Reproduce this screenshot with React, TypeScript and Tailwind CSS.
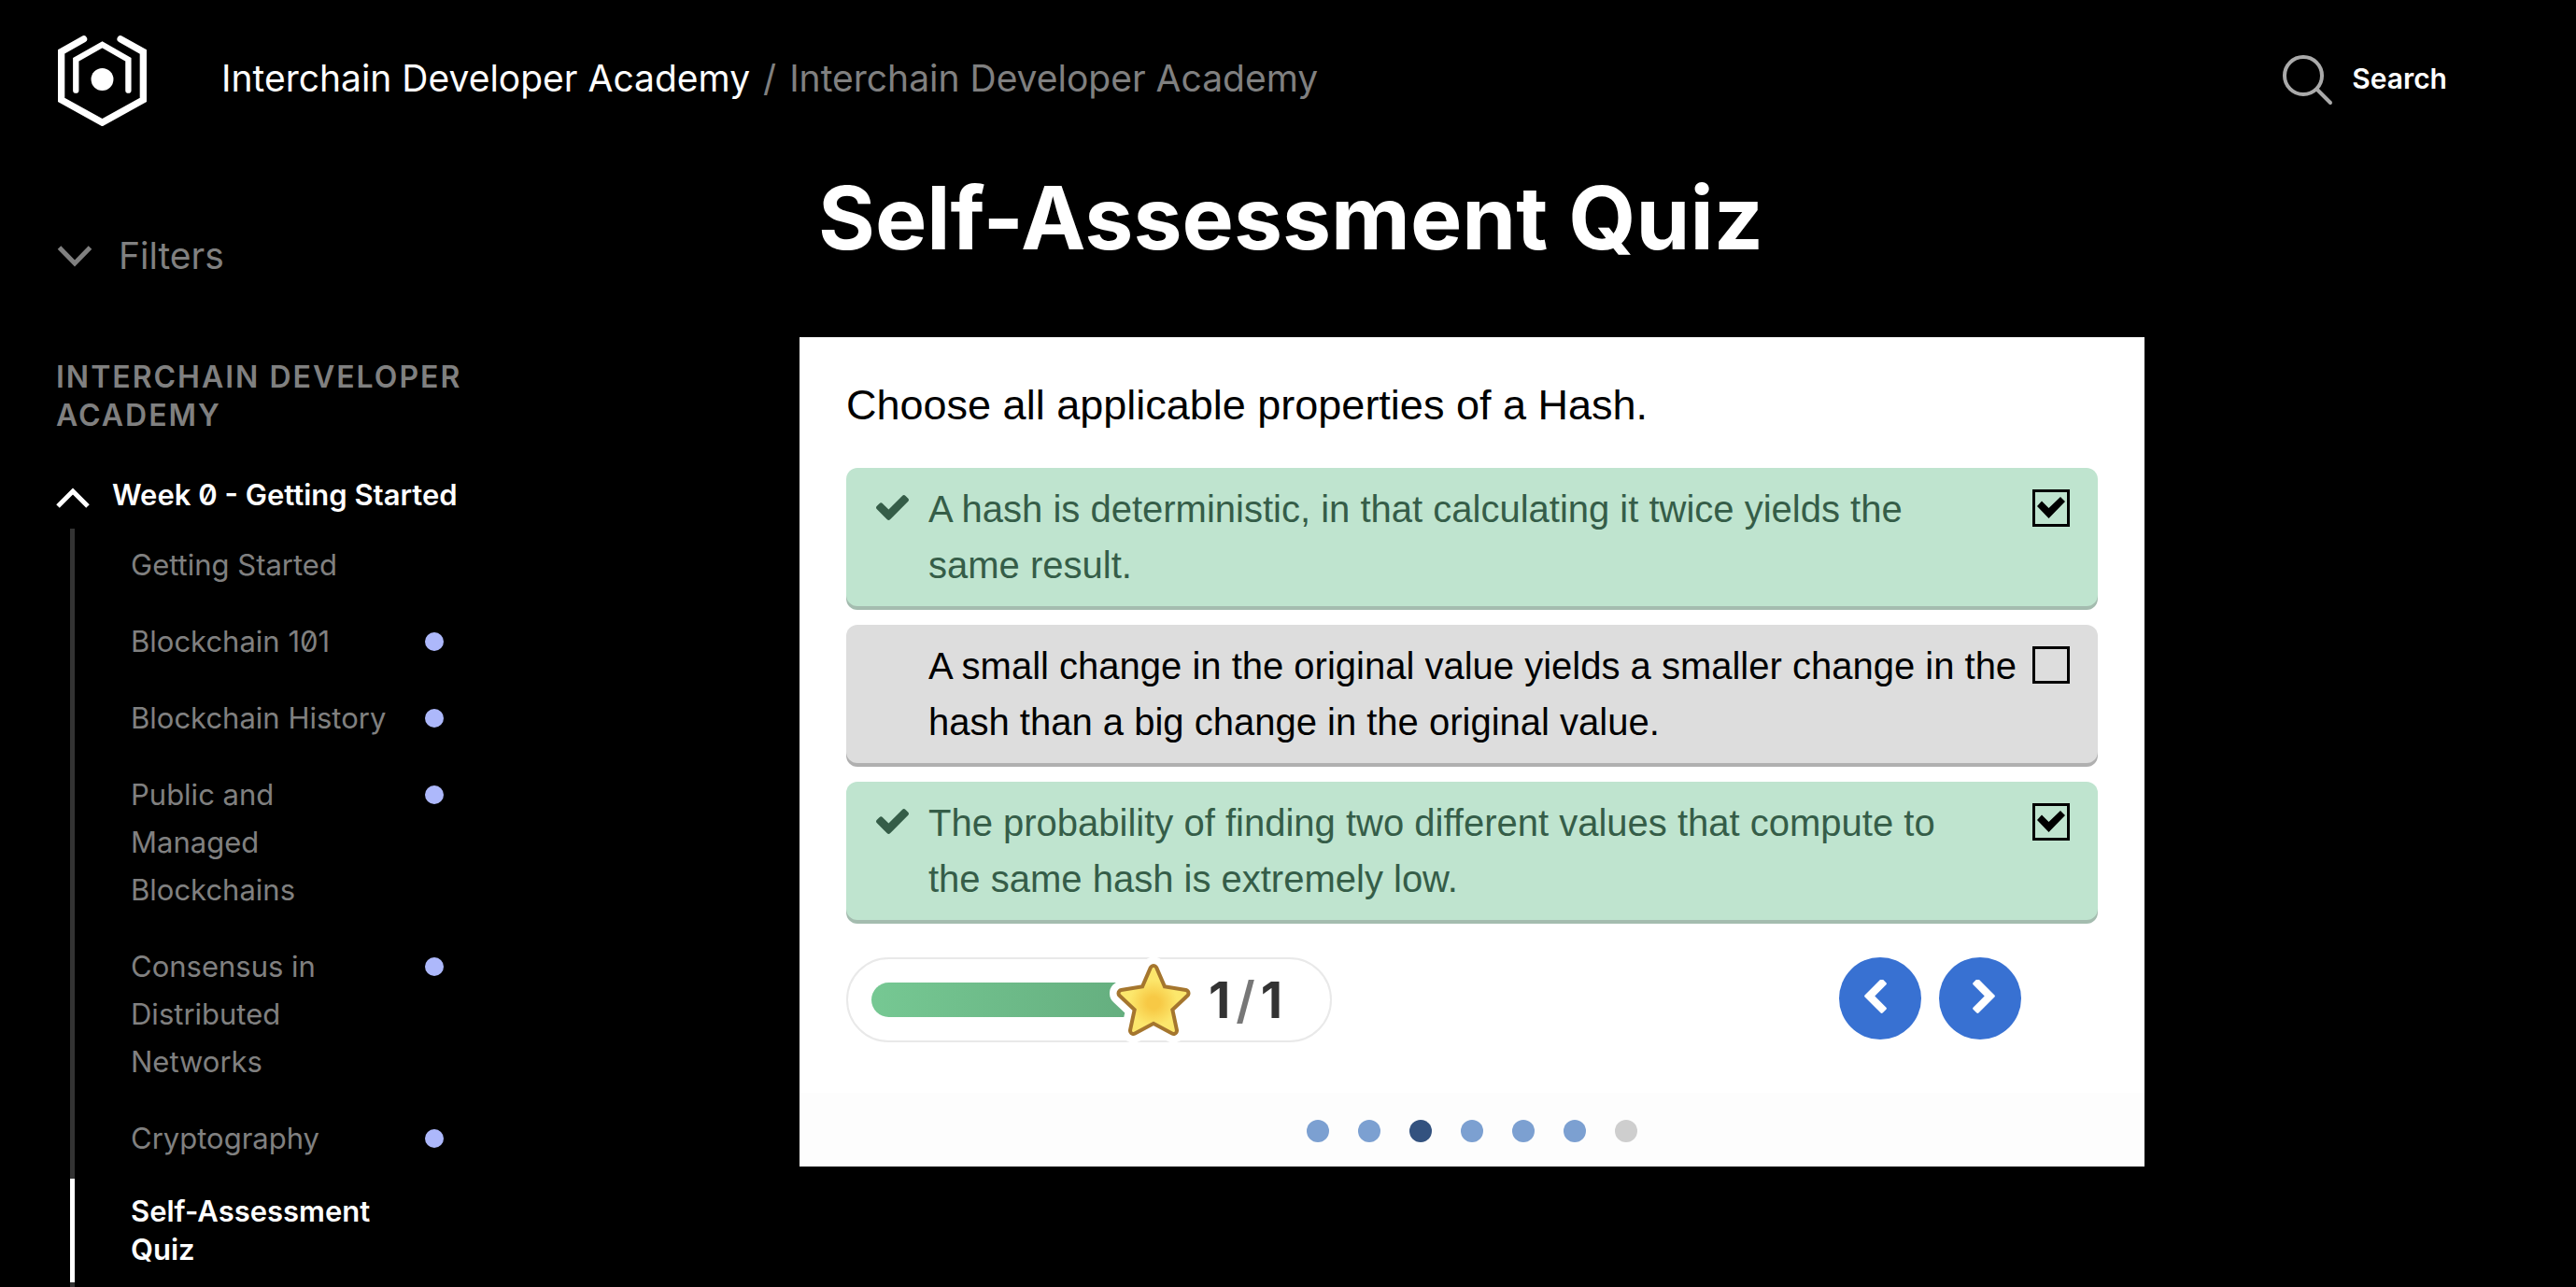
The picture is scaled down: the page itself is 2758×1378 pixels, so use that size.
import { useState } from "react";

type Lesson = { title: string; unread?: boolean; active?: boolean };

const lessons: Lesson[] = [
  { title: "Getting Started" },
  { title: "Blockchain 101", unread: true },
  { title: "Blockchain History", unread: true },
  { title: "Public and Managed Blockchains", unread: true },
  { title: "Consensus in Distributed Networks", unread: true },
  { title: "Cryptography", unread: true },
  { title: "Self-Assessment Quiz", active: true },
];

const answers = [
  { text: "A hash is deterministic, in that calculating it twice yields the same result.", correct: true },
  { text: "A small change in the original value yields a smaller change in the hash than a big change in the original value.", correct: false },
  { text: "The probability of finding two different values that compute to the same hash is extremely low.", correct: true },
];

const steps = ["done", "done", "current", "done", "done", "done", "todo"];

function Logo() {
  return (
    <svg viewBox="66 54 286 291" className="h-[97px] w-[95px]" fill="none" stroke="white" strokeLinecap="round" aria-hidden="true">
      <path d="M149 65 77 106V261L209 334 341 261V106L268 65" strokeWidth="22" />
      <path d="M124 230V131L209 83 293 131V230" strokeWidth="19" />
      <circle cx="209" cy="195" r="36" fill="white" stroke="none" />
    </svg>
  );
}

function Tick({ className }: { className: string }) {
  return (
    <svg viewBox="121 334 1550 1188" className={className} fill="currentColor" aria-hidden="true">
      <path d="M1671 566q0 40-28 68l-724 724-136 136q-28 28-68 28t-68-28l-136-136-362-362q-28-28-28-68t28-68l136-136q28-28 68-28t68 28l294 295 656-657q28-28 68-28t68 28l136 136q28 28 28 68z" />
    </svg>
  );
}

function Star() {
  const shape = "M49 14.500 58.500 36.500 83 40.500 65.500 57 70.500 80.500 49 69 27.500 80.500 32.500 57 15 40.500 39.500 36.500Z";
  return (
    <svg viewBox="0 0 98 95" className="h-[95px] w-[98px]" aria-hidden="true">
      <defs>
        <radialGradient id="gold" cx="50%" cy="55%" r="50%">
          <stop offset="0.2" stopColor="#f7c945" />
          <stop offset="0.75" stopColor="#fce76c" />
        </radialGradient>
      </defs>
      <g strokeLinejoin="round">
        <path d={shape} fill="white" stroke="white" strokeWidth="26" />
        <path d={shape} fill="#a5762e" stroke="#a5762e" strokeWidth="11" />
        <path d={shape} fill="url(#gold)" stroke="url(#gold)" strokeWidth="3" />
      </g>
    </svg>
  );
}

export default function App() {
  const [checked, setChecked] = useState(answers.map((a) => a.correct));

  return (
    <div className="min-h-screen bg-black font-['Inter',sans-serif] text-white">
      <header className="flex items-center pt-[38px] pr-[138px] pl-[62px]">
        <a href="#home" aria-label="Home">
          <Logo />
        </a>
        <nav aria-label="Breadcrumb" className="mb-1.5 ml-20 flex flex-1 gap-[14px] text-[39px] leading-[48px] whitespace-nowrap text-[#808080]">
          <a href="#academy" className="text-white">Interchain Developer Academy</a>
          <span>/</span>
          <a href="#academy">Interchain Developer Academy</a>
        </nav>
        <button type="button" className="mb-1.5 flex items-center gap-5 text-[30px] leading-10 font-semibold">
          <svg viewBox="0 0 54 54" className="mt-1 h-[54px] w-[54px]" fill="none" stroke="#aaaaaa" strokeWidth="4" strokeLinecap="round" aria-hidden="true">
            <circle cx="22" cy="22" r="20" />
            <path d="M37 37 51 51" />
          </svg>
          Search
        </button>
      </header>

      <div className="flex">
        <aside className="w-[500px] shrink-0 pt-[115px] pl-[60px]">
          <button type="button" className="flex items-center gap-[27px] text-[39px] leading-[48px] text-[#808080]">
            <svg viewBox="0 0 40 24" className="h-6 w-10" fill="none" stroke="currentColor" strokeWidth="5" aria-hidden="true">
              <path d="M3.500 3 20 20 36.500 3" />
            </svg>
            Filters
          </button>

          <h2 className="mt-[85px] text-[32px] leading-[41px] font-semibold tracking-[2px] text-[#808080] uppercase">
            Interchain Developer Academy
          </h2>

          <button type="button" className="mt-11 flex items-center gap-6 text-[31px] leading-[41px] font-semibold whitespace-nowrap [font-feature-settings:'zero']">
            <svg viewBox="0 0 36 22" className="mt-1.5 h-[22px] w-9" fill="none" stroke="currentColor" strokeWidth="5" aria-hidden="true">
              <path d="M2 20 18 4 34 20" />
            </svg>
            Week 0 - Getting Started
          </button>

          <ul className="mt-4 ml-[15px] text-[31px] [font-feature-settings:'zero']">
            {lessons.map((lesson) => (
              <li key={lesson.title} className={lesson.active ? "border-l-[5px] border-white" : "border-l-[5px] border-[#333333]"}>
                <a
                  href="#lesson"
                  className={
                    lesson.active
                      ? "flex pt-[14px] pr-[25px] pb-[15px] pl-[60px] leading-[41px] font-semibold"
                      : "flex justify-between pt-[13px] pr-[25px] pb-[18px] pl-[60px] leading-[51px] text-[#808080]"
                  }
                >
                  <span className="max-w-[280px]">{lesson.title}</span>
                  {lesson.unread && <span className="mt-4 h-5 w-5 shrink-0 rounded-full bg-[#adb8fb]" />}
                </a>
              </li>
            ))}
            <li className="h-[5px] border-l-[5px] border-[#333333]" />
          </ul>
        </aside>

        <main className="min-w-0 flex-1 pt-[42px] pr-[462px] pl-[356px]">
          <h1 className="ml-5 text-[93px] leading-[112px] font-bold">Self-Assessment Quiz</h1>

          <section className="mt-[72px] bg-white font-['Liberation_Sans',Arial,sans-serif] text-black">
            <form className="px-[50px] pt-[39px] pb-[54px]">
              <p className="text-[45px] leading-[68px]">Choose all applicable properties of a Hash.</p>

              <div className="mt-[33px] flex flex-col gap-5">
                {answers.map((answer, i) => (
                  <label
                    key={answer.text}
                    className={
                      answer.correct
                        ? "flex items-start rounded-xl bg-[#bfe4cf] py-[14px] pr-[30px] pl-8 text-[40px] leading-[60px] text-[#355d48] shadow-[0_4px_0_#a4bcaf]"
                        : "flex items-start rounded-xl bg-[#dddddd] py-[14px] pr-[30px] pl-8 text-[40px] leading-[60px] shadow-[0_4px_0_#b0b0b0]"
                    }
                  >
                    <span className="mt-[15px] mr-[21px] w-[35px] shrink-0">
                      {answer.correct && <Tick className="h-[27px] w-[35px]" />}
                    </span>
                    <span className={answer.correct ? "flex-1 pr-16" : "flex-1"}>{answer.text}</span>
                    <span className="relative mt-[9px] h-10 w-10 shrink-0">
                      <input
                        type="checkbox"
                        checked={checked[i]}
                        onChange={() => setChecked(checked.map((c, j) => (j === i ? !c : c)))}
                        className="block h-10 w-10 appearance-none border-[3px] border-black"
                      />
                      {checked[i] && (
                        <svg viewBox="0 0 40 40" className="pointer-events-none absolute inset-0 h-10 w-10 text-black" fill="currentColor" aria-hidden="true">
                          <path d="M5 18 10 12.500 17.500 20 30 8 35 13 17.500 31Z" />
                        </svg>
                      )}
                    </span>
                  </label>
                ))}
              </div>

              <div className="mt-10 flex items-start justify-between">
                <div className="flex h-[91px] w-[520px] items-center rounded-full border-2 border-[#e9e9e9] pl-[25px]">
                  <div className="h-[37px] w-[290px] rounded-l-full bg-linear-to-r from-[#76c893] to-[#64ad7e]" />
                  <div className="-ml-[37px] shrink-0">
                    <Star />
                  </div>
                  <p className="ml-2.5 flex gap-1.5 font-['Inter',sans-serif] text-[54px] leading-[64px] font-bold text-[#333333]">
                    <span>1</span>
                    <span className="font-semibold text-[#777777]">/</span>
                    <span>1</span>
                  </p>
                </div>
                <div className="mr-[82px] flex gap-[19px] text-white">
                  <button type="button" aria-label="Previous question" className="flex h-[88px] w-[88px] items-center justify-center rounded-full bg-[#3871d2] pr-2.5 pb-1">
                    <svg viewBox="410 71 1036 1567" className="h-9 w-6" fill="currentColor" aria-hidden="true">
                      <path d="M1427 301l-531 531 531 531q19 19 19 45t-19 45l-166 166q-19 19-45 19t-45-19l-742-742q-19-19-19-45t19-45l742-742q19-19 45-19t45 19l166 166q19 19 19 45t-19 45z" />
                    </svg>
                  </button>
                  <button type="button" aria-label="Next question" className="flex h-[88px] w-[88px] items-center justify-center rounded-full bg-[#3871d2] pb-1 pl-2">
                    <svg viewBox="346 71 1036 1567" className="h-9 w-6" fill="currentColor" aria-hidden="true">
                      <path d="M1363 877l-742 742q-19 19-45 19t-45-19l-166-166q-19-19-19-45t19-45l531-531-531-531q-19-19-19-45t19-45l166-166q19-19 45-19t45 19l742 742q19 19 19 45t-19 45z" />
                    </svg>
                  </button>
                </div>
              </div>
            </form>

            <div className="flex justify-center gap-[31px] bg-[#fdfdfd] pt-[29px] pb-[26px]">
              {steps.map((step, i) => (
                <button
                  key={i}
                  type="button"
                  aria-label={`Question ${i + 1}`}
                  className={
                    step === "current"
                      ? "h-6 w-6 rounded-full bg-[#33527f]"
                      : step === "done"
                        ? "h-6 w-6 rounded-full bg-[#7ca0d1]"
                        : "h-6 w-6 rounded-full bg-[#cecece]"
                  }
                />
              ))}
            </div>
          </section>
        </main>
      </div>
    </div>
  );
}
